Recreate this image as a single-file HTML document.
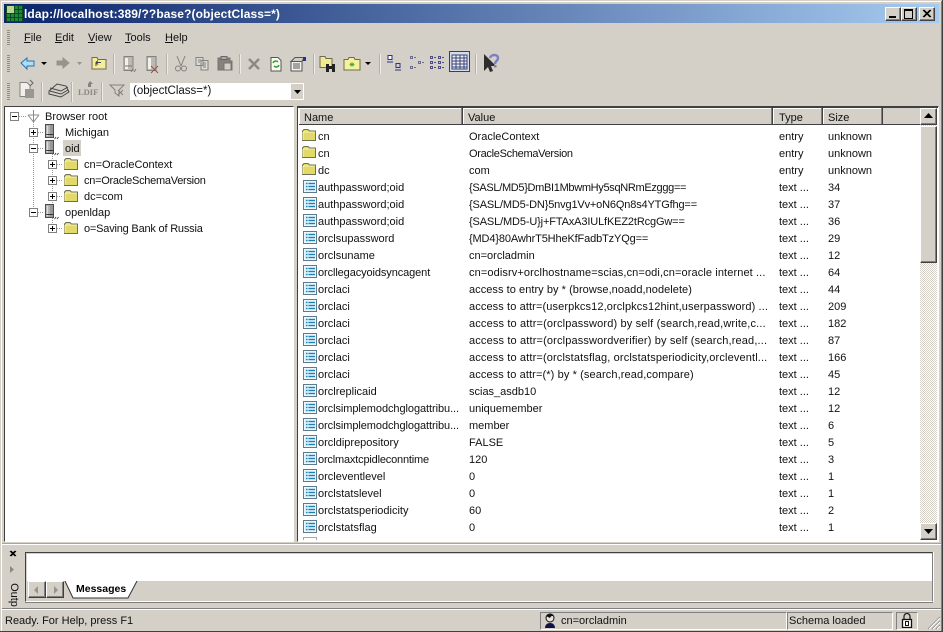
<!DOCTYPE html>
<html><head><meta charset="utf-8"><style>
html,body{margin:0;padding:0}
body{width:943px;height:632px;position:relative;overflow:hidden;background:#d4d0c8;font:11px "Liberation Sans",sans-serif;color:#111}
.a,.t,svg{position:absolute}
.t{white-space:nowrap;line-height:14px;height:14px;margin-top:1px}
.w{letter-spacing:.11px}
.sep{position:absolute;width:1px;background:#b5b2ab;border-right:1px solid #eeece8}
.grip{position:absolute;width:3px;background:repeating-linear-gradient(#8f8c85 0 1px,#d4d0c8 1px 2px)}
u{text-decoration:underline}
.hd{position:absolute;top:108px;height:16px;background:#d4d0c8;border-right:1px solid #404040;box-shadow:inset -1px 0 #808080,inset 1px 1px #fff}
.btn{position:absolute;background:#d4d0c8;box-sizing:border-box;border:1px solid;border-color:#fff #404040 #404040 #fff;box-shadow:inset -1px -1px #808080}
</style></head><body>
<svg width="0" height="0" style="position:absolute"><defs>
<symbol id="fold" viewBox="0 0 16 14"><path d="M1.500 12.500V3L3 1.500h4L8.500 3h6v9.500z" fill="#e2da68" stroke="#6f6f52"/><path d="M2 4h12M2 4v8" stroke="#f8f4b8"/></symbol>
<symbol id="attr" viewBox="0 0 14 14"><rect x=".5" y=".5" width="13" height="12" fill="#fff" stroke="#5f7a8c"/><rect x="1.500" y="1.500" width="11" height="10" fill="#d6eef9"/><path d="M3 3.500h1.500M3 6.500h1.500M3 9.500h1.500" stroke="#0f86bd" stroke-width="1.300"/><path d="M5.500 3.500h6.500M5.500 6.500h6.500M5.500 9.500h6.500" stroke="#1f7fae" stroke-width="1.300"/></symbol>
<symbol id="srv" viewBox="0 0 16 16"><path d="M2.500 .5h8v13h-8z" fill="#979797" stroke="#4c4c4c"/><path d="M3.500 1.500h1.500v11H3.500z" fill="#dcdcdc"/><path d="M5 1.500h2v11H5z" fill="#b4b4b4"/><path d="M3.500 10.500h6.500" stroke="#333"/><path d="M11.500 15l1.500-2M14 15l1.500-2" stroke="#444"/></symbol>
<symbol id="plus" viewBox="0 0 9 9"><rect x=".5" y=".5" width="8" height="8" fill="#fff" stroke="#808080"/><path d="M2 4.500h5M4.500 2v5" stroke="#000"/></symbol>
<symbol id="minus" viewBox="0 0 9 9"><rect x=".5" y=".5" width="8" height="8" fill="#fff" stroke="#808080"/><path d="M2 4.500h5" stroke="#000"/></symbol>
</defs></svg>

<!-- window frame -->
<div class="a" style="left:0;top:0;width:943px;height:1px;background:#d4d0c8"></div>
<div class="a" style="left:1px;top:1px;width:941px;height:1px;background:#fff"></div>
<div class="a" style="left:0;top:631px;width:943px;height:1px;background:#404040"></div>
<div class="a" style="left:942px;top:0;width:1px;height:632px;background:#404040"></div>
<div class="a" style="left:941px;top:1px;width:1px;height:630px;background:#808080"></div>
<div class="a" style="left:1px;top:1px;width:1px;height:630px;background:#fff"></div>

<!-- title bar -->
<div class="a" style="left:4px;top:4px;width:935px;height:19px;background:linear-gradient(90deg,#0a246a,#a6caf0)"></div>
<svg style="left:6px;top:5px" width="17" height="17"><rect width="17" height="17" fill="#0c4a1e"/><rect x="1" y="1" width="7" height="7" fill="#b8d890"/><g fill="#1d8a3a"><rect x="9" y="1" width="3" height="3"/><rect x="13" y="1" width="3" height="3"/><rect x="9" y="5" width="3" height="3"/><rect x="13" y="5" width="3" height="3"/><rect x="1" y="9" width="3" height="3"/><rect x="5" y="9" width="3" height="3"/><rect x="9" y="9" width="3" height="3"/><rect x="13" y="9" width="3" height="3"/><rect x="1" y="13" width="3" height="3"/><rect x="5" y="13" width="3" height="3"/><rect x="9" y="13" width="3" height="3"/><rect x="13" y="13" width="3" height="3"/></g></svg>
<div class="t" style="left:24px;top:6px;color:#fff;font-weight:bold;font-size:12px;letter-spacing:.1px">ldap://localhost:389/??base?(objectClass=*)</div>
<div class="btn" style="left:885px;top:7px;width:16px;height:14px"></div>
<div class="a" style="left:889px;top:16px;width:7px;height:2px;background:#000"></div>
<div class="btn" style="left:901px;top:7px;width:16px;height:14px"></div>
<div class="a" style="left:904px;top:9px;width:7px;height:7px;border:1px solid #000;border-top-width:2px"></div>
<div class="btn" style="left:919px;top:7px;width:16px;height:14px"></div>
<svg style="left:922px;top:9px" width="10" height="10"><path d="M1 1l7 7M2 1l7 7M8 1L1 8M9 1L2 8" stroke="#000" fill="none"/></svg>

<!-- menu -->
<div class="grip" style="left:7px;top:30px;height:15px"></div>
<div class="t" style="left:24px;top:30px"><u>F</u>ile</div>
<div class="t" style="left:55px;top:30px"><u>E</u>dit</div>
<div class="t" style="left:88px;top:30px"><u>V</u>iew</div>
<div class="t" style="left:125px;top:30px"><u>T</u>ools</div>
<div class="t" style="left:165px;top:30px"><u>H</u>elp</div>

<!-- toolbar 1 -->
<div class="grip" style="left:7px;top:55px;height:17px"></div>
<svg style="left:0;top:48px" width="943" height="56" fill="none">
<path d="M21 15l6-5v3h7v5h-7v3z" fill="#a8e0f8" stroke="#2f6fb0"/>
<path d="M41 14h6l-3 3z" fill="#000"/>
<path d="M57 13h6v-3l6 5-6 5v-3h-6z" fill="#97948d" stroke="#97948d"/>
<path d="M77 14h5l-2.500 3z" fill="#97948d"/>
<path d="M92 9.500h5l1 2h8v9.500H92z" fill="#f4ee9c" stroke="#6e6c50"/><path d="M96 18v-3.500h5M96 14.500l2-2M96 14.500l2 2" stroke="#444"/>
<path d="M124 8.500h9v14h-9z" fill="#bcb9b2" stroke="#85827c"/><path d="M125 10h3v11h-3z" fill="#f2f1ee"/><path d="M125 18h7" stroke="#777"/><path d="M134 24l2-3M131 24l2-3" stroke="#777"/>
<path d="M147 8.500h9v14h-9z" fill="#bcb9b2" stroke="#85827c"/><path d="M148 10h3v11h-3z" fill="#f2f1ee"/><path d="M151 18l7 7M158 18l-7 7" stroke="#a44e4e"/>
<path d="M177 8l4 10M185 8l-4 10" stroke="#85827c"/><circle cx="178" cy="20.500" r="2.500" stroke="#85827c"/><circle cx="184" cy="20.500" r="2.500" stroke="#85827c"/>
<path d="M196 9.500h7v8h-7zM201 12.500h7v9.500h-7z" fill="#dcdad5" stroke="#85827c"/><path d="M203 15h3M203 17h3M203 19h3M198 12h3M198 14h2" stroke="#85827c"/>
<path d="M218 10h12v3h2v9h-14z" fill="#85827c" stroke="#77746e"/><path d="M221 8.500h6v3h-6z" fill="#aaa" stroke="#666"/><path d="M224 15h7v7h-7z" fill="#d4d0c8" stroke="#77746e"/>
<path d="M249 11l10 10M259 11l-10 10" stroke="#8c8982" stroke-width="2.500"/>
<path d="M271 9.500h7l3 3v10.500h-10z" fill="#fcfcf4" stroke="#555"/><path d="M273 15a3 3 0 0 1 5-1M279 17a3 3 0 0 1-5 1" stroke="#2ba02b" stroke-width="1.500"/>
<path d="M291 13.500h11v9.500h-11z" fill="#f2f1ee" stroke="#555"/><path d="M291 13.500l4-4h9l-2 4z" fill="#cfcdc6" stroke="#555"/><path d="M293 16h7M293 18h7M293 20h7" stroke="#555"/><rect x="303" y="9" width="3" height="4" fill="#2b2f8c"/>
<path d="M320 8.500h5l1 2h6v9h-12z" fill="#f0ea90" stroke="#6e6c50"/><path d="M326 16h3v8h-3zM332 16h3v8h-3zM328 18h5v3h-5z" fill="#222"/>
<path d="M344 11.500h4l1-2h5l1 2h5v10.500h-16z" fill="#f4f29c" stroke="#6e6c50"/><path d="M352 14v5M349.500 16.500h5M350 15l4 3M354 15l-4 3" stroke="#4a9a3a" stroke-width=".7"/>
<path d="M365 14h6l-3 3z" fill="#000"/>
<path d="M388 7.500h4v4h-4z" fill="#fff" stroke="#2d2f8f"/><path d="M387 14h6M396 15.500h4v4h-4z" stroke="#2d2f8f"/><path d="M395 22h6" stroke="#2d2f8f"/>
<path d="M410.500 8.500h2v2h-2zM414 9.500h2M418.500 13.500h2v2h-2zM422 14.500h2M410.500 18.500h2v2h-2zM414 19.500h2" stroke="#6a6c98"/>
<path d="M430.500 8.500h2v2h-2zM434 9.500h2M430.500 13.500h2v2h-2zM434 14.500h2M430.500 18.500h2v2h-2zM434 19.500h2M438.500 8.500h2v2h-2zM442 9.500h2M438.500 13.500h2v2h-2zM442 14.500h2M438.500 18.500h2v2h-2zM442 19.500h2" stroke="#4c4e82"/>
<rect x="449.500" y="3.500" width="20" height="20" fill="#d5dcea" stroke="#2a3f80"/><path d="M452 7h15v14h-15zM452 10h15M452 13h15M452 16h15M452 19h15M456 7v14M460 7v14M464 7v14" stroke="#3a4478" fill="#f0f0f4"/>
<path d="M484 6l0 17 4-4 2 5 3-1-2-5 5 0z" fill="#2e2e2e"/><path d="M490 10c1-4 8-4 8 0 0 3-3 3-3 6" stroke="#7a80c0" stroke-width="2.400"/><rect x="494" y="17" width="2.500" height="2.500" fill="#7a80c0"/>
<!-- toolbar 2 icons -->
<path d="M20 34.500h7l3 3v11H20z" fill="#f1f0ed" stroke="#85827c"/><rect x="25" y="41" width="9" height="9" fill="#9a9792"/><path d="M30 32l3 3-3 3" stroke="#666"/>
<path d="M49 46l12 3 8-5-3-6-9-2-8 7z" fill="#d4d0c8" stroke="#444"/><path d="M50 40l11 3 7-4M50 43l11 3 7-4" stroke="#444"/>
<text x="78" y="47" font-family="Liberation Serif,serif" font-weight="bold" font-size="8.500" fill="#8c8982" stroke="none">LDIF</text><path d="M90 33l3 3h-2v3h-3v-3z" fill="#85827c"/>
<path d="M110 37h14l-5 5v6l-4-3v-3z" fill="#d4d0c8" stroke="#85827c"/><path d="M118 42l5 5M123 42l-5 5" stroke="#85827c"/>
</svg>
<div class="sep" style="left:113px;top:54px;height:20px"></div>
<div class="sep" style="left:166px;top:54px;height:20px"></div>
<div class="sep" style="left:239px;top:54px;height:20px"></div>
<div class="sep" style="left:313px;top:54px;height:20px"></div>
<div class="sep" style="left:379px;top:54px;height:20px"></div>
<div class="sep" style="left:475px;top:54px;height:20px"></div>

<!-- toolbar 2 -->
<div class="grip" style="left:7px;top:83px;height:17px"></div>
<div class="sep" style="left:41px;top:82px;height:20px"></div>
<div class="sep" style="left:71px;top:82px;height:20px"></div>
<div class="sep" style="left:101px;top:82px;height:20px"></div>
<div class="a" style="left:130px;top:83px;width:174px;height:17px;background:#fff"></div>
<div class="t" style="left:133px;top:83px;font-size:11.500px">(objectClass=*)</div>
<div class="a" style="left:291px;top:84px;width:12px;height:15px;background:#d4d0c8"></div>
<svg style="left:294px;top:90px" width="7" height="4"><path d="M0 0h7L3.500 4z" fill="#000"/></svg>

<!-- tree panel -->
<div class="a" style="left:4px;top:106px;width:290px;height:436px;background:#fff;box-sizing:border-box;border:1px solid;border-color:#404040 #fff #fff #404040"></div>
<svg style="left:5px;top:107px" width="150" height="130" fill="none">
<path d="M28.500 15V105M14 9.500h8M33 25.500h6M33 41.500h6M47.500 45V116M33 105.500h6M52 57.500h6M52 73.500h6M52 89.500h6M52 121.500h6" stroke="#9a9a9a" stroke-dasharray="1 1"/>
<path d="M28.500 3v12M23 8h11M23 8l5.500 7 5.500-7" stroke="#8b8b8b"/>
</svg>
<svg style="left:10px;top:112px" width="9" height="9"><use href="#minus"/></svg>
<svg style="left:29px;top:128px" width="9" height="9"><use href="#plus"/></svg>
<svg style="left:29px;top:144px" width="9" height="9"><use href="#minus"/></svg>
<svg style="left:48px;top:160px" width="9" height="9"><use href="#plus"/></svg>
<svg style="left:48px;top:176px" width="9" height="9"><use href="#plus"/></svg>
<svg style="left:48px;top:192px" width="9" height="9"><use href="#plus"/></svg>
<svg style="left:29px;top:208px" width="9" height="9"><use href="#minus"/></svg>
<svg style="left:48px;top:224px" width="9" height="9"><use href="#plus"/></svg>
<svg style="left:43px;top:124px" width="16" height="16"><use href="#srv"/></svg>
<svg style="left:43px;top:140px" width="16" height="16"><use href="#srv"/></svg>
<svg style="left:43px;top:204px" width="16" height="16"><use href="#srv"/></svg>
<svg style="left:63px;top:157px" width="16" height="14"><use href="#fold"/></svg>
<svg style="left:63px;top:173px" width="16" height="14"><use href="#fold"/></svg>
<svg style="left:63px;top:189px" width="16" height="14"><use href="#fold"/></svg>
<svg style="left:63px;top:221px" width="16" height="14"><use href="#fold"/></svg>
<div class="a" style="left:63px;top:140px;width:18px;height:16px;background:#d4d0c8"></div>
<div class="t" style="left:45px;top:109px">Browser root</div>
<div class="t" style="left:65px;top:125px">Michigan</div>
<div class="t" style="left:65px;top:141px">oid</div>
<div class="t" style="left:84px;top:157px">cn=OracleContext</div>
<div class="t" style="left:84px;top:173px;letter-spacing:-.27px">cn=OracleSchemaVersion</div>
<div class="t" style="left:84px;top:189px">dc=com</div>
<div class="t" style="left:65px;top:205px">openldap</div>
<div class="t" style="left:84px;top:221px;letter-spacing:-.2px">o=Saving Bank of Russia</div>

<!-- list panel -->
<div class="a" style="left:297px;top:106px;width:642px;height:436px;background:#fff;box-sizing:border-box;border:1px solid;border-color:#404040 #fff #fff #404040;overflow:hidden"></div>
<div class="a" style="left:298px;top:107px;width:640px;height:1px;background:#404040"></div>
<div class="hd" style="left:299px;width:163px"></div>
<div class="hd" style="left:463px;width:309px"></div>
<div class="hd" style="left:773px;width:49px"></div>
<div class="hd" style="left:823px;width:59px"></div>
<div class="hd" style="left:883px;width:37px;border:0;box-shadow:none"></div>
<div class="a" style="left:299px;top:124px;width:621px;height:1px;background:#404040"></div>
<div class="t" style="left:304px;top:110px">Name</div>
<div class="t" style="left:468px;top:110px">Value</div>
<div class="t" style="left:779px;top:110px">Type</div>
<div class="t" style="left:828px;top:110px">Size</div>

<!-- rows -->
<svg style="left:301px;top:128px" width="16" height="14"><use href="#fold"/></svg>
<svg style="left:301px;top:145px" width="16" height="14"><use href="#fold"/></svg>
<svg style="left:301px;top:162px" width="16" height="14"><use href="#fold"/></svg>
<svg style="left:303px;top:180px" width="14" height="14"><use href="#attr"/></svg>
<svg style="left:303px;top:197px" width="14" height="14"><use href="#attr"/></svg>
<svg style="left:303px;top:214px" width="14" height="14"><use href="#attr"/></svg>
<svg style="left:303px;top:231px" width="14" height="14"><use href="#attr"/></svg>
<svg style="left:303px;top:248px" width="14" height="14"><use href="#attr"/></svg>
<svg style="left:303px;top:265px" width="14" height="14"><use href="#attr"/></svg>
<svg style="left:303px;top:282px" width="14" height="14"><use href="#attr"/></svg>
<svg style="left:303px;top:299px" width="14" height="14"><use href="#attr"/></svg>
<svg style="left:303px;top:316px" width="14" height="14"><use href="#attr"/></svg>
<svg style="left:303px;top:333px" width="14" height="14"><use href="#attr"/></svg>
<svg style="left:303px;top:350px" width="14" height="14"><use href="#attr"/></svg>
<svg style="left:303px;top:367px" width="14" height="14"><use href="#attr"/></svg>
<svg style="left:303px;top:384px" width="14" height="14"><use href="#attr"/></svg>
<svg style="left:303px;top:401px" width="14" height="14"><use href="#attr"/></svg>
<svg style="left:303px;top:418px" width="14" height="14"><use href="#attr"/></svg>
<svg style="left:303px;top:435px" width="14" height="14"><use href="#attr"/></svg>
<svg style="left:303px;top:452px" width="14" height="14"><use href="#attr"/></svg>
<svg style="left:303px;top:469px" width="14" height="14"><use href="#attr"/></svg>
<svg style="left:303px;top:486px" width="14" height="14"><use href="#attr"/></svg>
<svg style="left:303px;top:503px" width="14" height="14"><use href="#attr"/></svg>
<svg style="left:303px;top:520px" width="14" height="14"><use href="#attr"/></svg>
<div class="a" style="left:303px;top:537px;width:14px;height:3px;border:1px solid #a0a8b0;border-bottom:0;box-sizing:border-box"></div>

<div class="t" style="left:318px;top:129px">cn</div><div class="t" style="left:469px;top:129px">OracleContext</div><div class="t" style="left:779px;top:129px">entry</div><div class="t" style="left:828px;top:129px">unknown</div>
<div class="t" style="left:318px;top:146px">cn</div><div class="t" style="left:469px;top:146px;letter-spacing:-.3px">OracleSchemaVersion</div><div class="t" style="left:779px;top:146px">entry</div><div class="t" style="left:828px;top:146px">unknown</div>
<div class="t" style="left:318px;top:163px">dc</div><div class="t" style="left:469px;top:163px">com</div><div class="t" style="left:779px;top:163px">entry</div><div class="t" style="left:828px;top:163px">unknown</div>
<div class="t" style="left:318px;top:180px">authpassword;oid</div><div class="t" style="left:469px;top:180px;letter-spacing:-.32px">{SASL/MD5}DmBI1MbwmHy5sqNRmEzggg==</div><div class="t" style="left:779px;top:180px">text ...</div><div class="t" style="left:828px;top:180px">34</div>
<div class="t" style="left:318px;top:197px">authpassword;oid</div><div class="t" style="left:469px;top:197px;letter-spacing:-.16px">{SASL/MD5-DN}5nvg1Vv+oN6Qn8s4YTGfhg==</div><div class="t" style="left:779px;top:197px">text ...</div><div class="t" style="left:828px;top:197px">37</div>
<div class="t" style="left:318px;top:214px">authpassword;oid</div><div class="t" style="left:469px;top:214px;letter-spacing:-.14px">{SASL/MD5-U}j+FTAxA3IULfKEZ2tRcgGw==</div><div class="t" style="left:779px;top:214px">text ...</div><div class="t" style="left:828px;top:214px">36</div>
<div class="t" style="left:318px;top:231px">orclsupassword</div><div class="t" style="left:469px;top:231px;letter-spacing:-.14px">{MD4}80AwhrT5HheKfFadbTzYQg==</div><div class="t" style="left:779px;top:231px">text ...</div><div class="t" style="left:828px;top:231px">29</div>
<div class="t" style="left:318px;top:248px">orclsuname</div><div class="t" style="left:469px;top:248px">cn=orcladmin</div><div class="t" style="left:779px;top:248px">text ...</div><div class="t" style="left:828px;top:248px">12</div>
<div class="t" style="left:318px;top:265px;letter-spacing:-.1px">orcllegacyoidsyncagent</div><div class="t w" style="left:469px;top:265px">cn=odisrv+orclhostname=scias,cn=odi,cn=oracle internet ...</div><div class="t" style="left:779px;top:265px">text ...</div><div class="t" style="left:828px;top:265px">64</div>
<div class="t" style="left:318px;top:282px">orclaci</div><div class="t" style="left:469px;top:282px;letter-spacing:.05px">access to entry by * (browse,noadd,nodelete)</div><div class="t" style="left:779px;top:282px">text ...</div><div class="t" style="left:828px;top:282px">44</div>
<div class="t" style="left:318px;top:299px">orclaci</div><div class="t w" style="left:469px;top:299px">access to attr=(userpkcs12,orclpkcs12hint,userpassword) ...</div><div class="t" style="left:779px;top:299px">text ...</div><div class="t" style="left:828px;top:299px">209</div>
<div class="t" style="left:318px;top:316px">orclaci</div><div class="t" style="left:469px;top:316px;letter-spacing:.15px">access to attr=(orclpassword) by self (search,read,write,c...</div><div class="t" style="left:779px;top:316px">text ...</div><div class="t" style="left:828px;top:316px">182</div>
<div class="t" style="left:318px;top:333px">orclaci</div><div class="t" style="left:469px;top:333px;letter-spacing:.15px">access to attr=(orclpasswordverifier) by self (search,read,...</div><div class="t" style="left:779px;top:333px">text ...</div><div class="t" style="left:828px;top:333px">87</div>
<div class="t" style="left:318px;top:350px">orclaci</div><div class="t" style="left:469px;top:350px;letter-spacing:.14px">access to attr=(orclstatsflag, orclstatsperiodicity,orcleventl...</div><div class="t" style="left:779px;top:350px">text ...</div><div class="t" style="left:828px;top:350px">166</div>
<div class="t" style="left:318px;top:367px">orclaci</div><div class="t w" style="left:469px;top:367px">access to attr=(*) by * (search,read,compare)</div><div class="t" style="left:779px;top:367px">text ...</div><div class="t" style="left:828px;top:367px">45</div>
<div class="t" style="left:318px;top:384px">orclreplicaid</div><div class="t" style="left:469px;top:384px">scias_asdb10</div><div class="t" style="left:779px;top:384px">text ...</div><div class="t" style="left:828px;top:384px">12</div>
<div class="t" style="left:318px;top:401px;letter-spacing:-.07px">orclsimplemodchglogattribu...</div><div class="t" style="left:469px;top:401px">uniquemember</div><div class="t" style="left:779px;top:401px">text ...</div><div class="t" style="left:828px;top:401px">12</div>
<div class="t" style="left:318px;top:418px;letter-spacing:-.07px">orclsimplemodchglogattribu...</div><div class="t" style="left:469px;top:418px">member</div><div class="t" style="left:779px;top:418px">text ...</div><div class="t" style="left:828px;top:418px">6</div>
<div class="t" style="left:318px;top:435px">orcldiprepository</div><div class="t" style="left:469px;top:435px">FALSE</div><div class="t" style="left:779px;top:435px">text ...</div><div class="t" style="left:828px;top:435px">5</div>
<div class="t" style="left:318px;top:452px;letter-spacing:-.18px">orclmaxtcpidleconntime</div><div class="t" style="left:469px;top:452px">120</div><div class="t" style="left:779px;top:452px">text ...</div><div class="t" style="left:828px;top:452px">3</div>
<div class="t" style="left:318px;top:469px">orcleventlevel</div><div class="t" style="left:469px;top:469px">0</div><div class="t" style="left:779px;top:469px">text ...</div><div class="t" style="left:828px;top:469px">1</div>
<div class="t" style="left:318px;top:486px">orclstatslevel</div><div class="t" style="left:469px;top:486px">0</div><div class="t" style="left:779px;top:486px">text ...</div><div class="t" style="left:828px;top:486px">1</div>
<div class="t" style="left:318px;top:503px">orclstatsperiodicity</div><div class="t" style="left:469px;top:503px">60</div><div class="t" style="left:779px;top:503px">text ...</div><div class="t" style="left:828px;top:503px">2</div>
<div class="t" style="left:318px;top:520px">orclstatsflag</div><div class="t" style="left:469px;top:520px">0</div><div class="t" style="left:779px;top:520px">text ...</div><div class="t" style="left:828px;top:520px">1</div>

<!-- scrollbar -->
<div class="a" style="left:920px;top:108px;width:17px;height:432px;background:repeating-conic-gradient(#fff 0 25%,#d4d0c8 0 50%) 0 0/2px 2px"></div>
<div class="btn" style="left:920px;top:108px;width:17px;height:17px"></div>
<svg style="left:924px;top:113px" width="9" height="6"><path d="M4.500 0L9 5H0z" fill="#000"/></svg>
<div class="btn" style="left:920px;top:126px;width:17px;height:137px"></div>
<div class="btn" style="left:920px;top:523px;width:17px;height:17px"></div>
<svg style="left:924px;top:529px" width="9" height="6"><path d="M0 0h9L4.500 5z" fill="#000"/></svg>

<!-- output pane -->
<div class="a" style="left:2px;top:544px;width:939px;height:1px;background:#fff"></div>
<div class="a" style="left:2px;top:543px;width:939px;height:1px;background:#a8a59e"></div>
<svg style="left:9px;top:550px" width="8" height="8"><path d="M1 1l5 5M2 1l5 5M6 1L1 6M7 1L2 6" stroke="#000" fill="none"/></svg>
<svg style="left:10px;top:566px" width="5" height="7"><path d="M0 0l4 3.500L0 7z" fill="#8c8982"/></svg>
<div class="t" style="left:-4px;top:587px;width:36px;text-align:center;transform:rotate(90deg);transform-origin:center;font-size:11px">Outp</div>
<div class="a" style="left:25px;top:552px;width:908px;height:50px;box-sizing:border-box;border:1px solid;border-color:#404040 #808080 #fff #404040;background:#d4d0c8;box-shadow:0 1px #808080,1px 0 #fff"></div>
<div class="a" style="left:27px;top:554px;width:905px;height:27px;background:#fff"></div>
<div class="btn" style="left:28px;top:581px;width:18px;height:17px"></div>
<div class="btn" style="left:46px;top:581px;width:18px;height:17px"></div>
<svg style="left:34px;top:586px" width="5" height="8"><path d="M4 0L0 4l4 4z" fill="#97948d"/></svg>
<svg style="left:54px;top:586px" width="5" height="8"><path d="M0 0l4 4-4 4z" fill="#97948d"/></svg>
<svg style="left:64px;top:581px" width="76" height="18"><path d="M1 0l8 17h55L73 0z" fill="#fff"/><path d="M1 0l8 17h55L73 0" stroke="#333" fill="none"/></svg>
<div class="t" style="left:76px;top:581px;font-weight:bold;font-size:10.500px;color:#000">Messages</div>

<!-- status bar -->
<div class="a" style="left:2px;top:608px;width:939px;height:1px;background:#808080"></div>
<div class="a" style="left:2px;top:609px;width:939px;height:1px;background:#fff"></div>
<div class="t" style="left:5px;top:613px">Ready. For Help, press F1</div>
<div class="a" style="left:540px;top:612px;width:245px;height:16px;border:1px solid;border-color:#808080 #fff #fff #808080"></div>
<div class="a" style="left:787px;top:612px;width:104px;height:16px;border:1px solid;border-color:#808080 #fff #fff #808080"></div>
<div class="a" style="left:896px;top:612px;width:20px;height:16px;border:1px solid;border-color:#808080 #fff #fff #808080"></div>
<svg style="left:543px;top:613px" width="14" height="16"><circle cx="7" cy="5" r="4" fill="#e8e4e0" stroke="#111"/><path d="M3 3c2-3 7-3 8 0-3 0-3 0-4 2z" fill="#111"/><path d="M2 15c0-3 2-5 5-5s5 2 5 5z" fill="#12124a"/></svg>
<div class="t" style="left:561px;top:613px">cn=orcladmin</div>
<div class="t" style="left:789px;top:613px">Schema loaded</div>
<svg style="left:901px;top:613px" width="12" height="15" fill="none"><path d="M3 7V3.500a3 3 0 0 1 6 0V7" stroke="#222" stroke-width="1.300"/><rect x="1.500" y="6.500" width="9" height="8" fill="#fff" stroke="#111" stroke-width="1.300"/><rect x="4.500" y="8.500" width="3" height="4" stroke="#111"/></svg>
<svg style="left:927px;top:616px" width="14" height="14" fill="none"><path d="M13 1L1 13M13 5L5 13M13 9l-4 4" stroke="#808080"/><path d="M13 2L2 13M13 6l-7 7M13 10l-3 3" stroke="#fff"/></svg>
</body></html>
